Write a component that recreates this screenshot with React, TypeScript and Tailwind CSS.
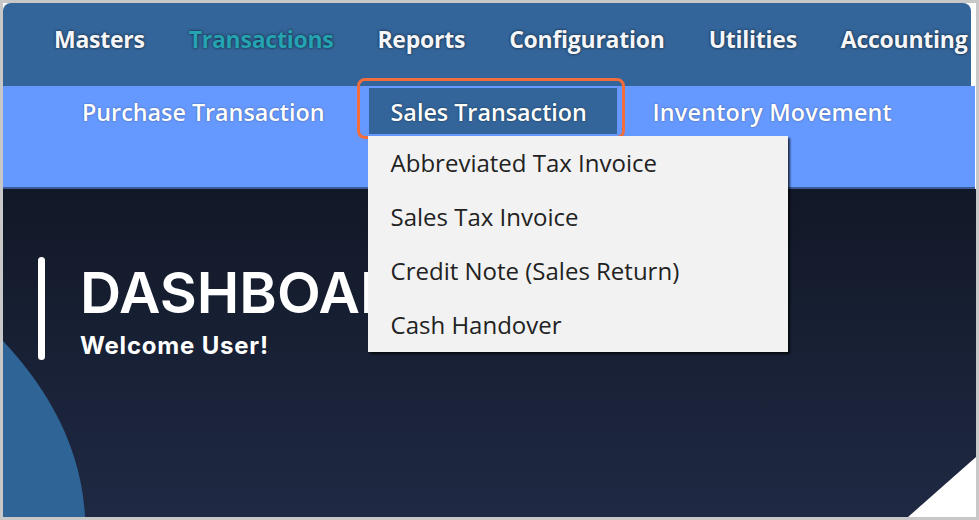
import { useState } from 'react';

const topMenu = ['Masters', 'Transactions', 'Reports', 'Configuration', 'Utilities', 'Accounting'];

const salesItems = [
  'Abbreviated Tax Invoice',
  'Sales Tax Invoice',
  'Credit Note (Sales Return)',
  'Cash Handover',
];

export default function App() {
  const [active] = useState('Transactions');

  return (
    <div className="w-[979px] h-[520px] bg-[#c8c8c8] p-[3px] overflow-hidden">
      <div className="relative w-full h-full bg-white flex flex-col overflow-hidden font-['Open_Sans',sans-serif]">
        {/* top menu */}
        <nav className="h-[83px] mr-[5px] shrink-0 bg-[#33659a] rounded-t-[8px] flex items-center pl-[51px] pb-[10px] gap-[44px]">
          {topMenu.map((m) => (
            <span
              key={m}
              className={
                'text-[23px] font-bold tracking-[-0.25px] whitespace-nowrap [text-shadow:0_0_3px_rgba(0,0,0,0.75)] ' +
                (m === active ? 'text-[#25a3b3]' : 'text-[#f4f6fa]')
              }
            >
              {m}
            </span>
          ))}
        </nav>

        {/* sub menu */}
        <div className="relative z-10 h-[103px] shrink-0 mr-[1px] bg-[#6699ff] border-b-2 border-[#3a5a99] flex items-start pt-[2px]">
          <div className="h-[46px] ml-[79px] flex items-center pt-[3px]">
            <span className="text-[23.3px] font-semibold text-white [text-shadow:0_0_2px_rgba(0,0,0,0.45)]">
              Purchase Transaction
            </span>
          </div>

          <div className="relative h-[46px] w-[248px] ml-[44px] bg-[#33659a] flex items-center pl-[22px] pt-[3px]">
            <span className="text-[23.3px] font-semibold text-white [text-shadow:0_0_2px_rgba(0,0,0,0.6)]">
              Sales Transaction
            </span>
            <div className="absolute -left-[12px] -right-[8px] -top-[10px] -bottom-[5px] border-[3px] border-[#f36c3b] rounded-[8px]" />

            <ul className="absolute left-[-1px] top-[48px] w-[420px] bg-[#f2f2f2] shadow-[2px_2px_2px_rgba(0,0,0,0.7)]">
              {salesItems.map((s) => (
                <li key={s} className="h-[54px] flex items-center pl-[23px] text-[24px] text-[#222]">
                  {s}
                </li>
              ))}
            </ul>
          </div>

          <div className="h-[46px] ml-[36px] flex items-center pt-[3px]">
            <span className="text-[23.3px] font-semibold tracking-[0.2px] text-white [text-shadow:0_0_2px_rgba(0,0,0,0.45)]">
              Inventory Movement
            </span>
          </div>
        </div>

        {/* dashboard */}
        <main className="relative flex-1 bg-gradient-to-b from-[#111827] to-[#1f2943] [clip-path:polygon(0_0,100%_0,100%_calc(100%-60px),calc(100%-68px)_100%,0_100%)]">
          <svg className="absolute left-0 bottom-0" width="90" height="180" viewBox="0 0 90 180">
            <path d="M0 4 C 34 40, 78 100, 82 180 L 0 180 Z" fill="#2f6596" />
          </svg>

          <div className="relative flex pl-[35px] pt-[68px]">
            <div className="w-[7px] h-[103px] rounded-full bg-white" />
            <div className="ml-[35px] mt-[4px]">
              <h1 className="text-[57px] leading-[64px] font-semibold text-white font-['Inter',sans-serif]">
                DASHBOARD
              </h1>
              <p className="mt-[7px] text-[24px] leading-[28px] font-bold text-white font-['Inter',sans-serif] tracking-[0.8px]">
                Welcome User!
              </p>
            </div>
          </div>
        </main>
      </div>
    </div>
  );
}
